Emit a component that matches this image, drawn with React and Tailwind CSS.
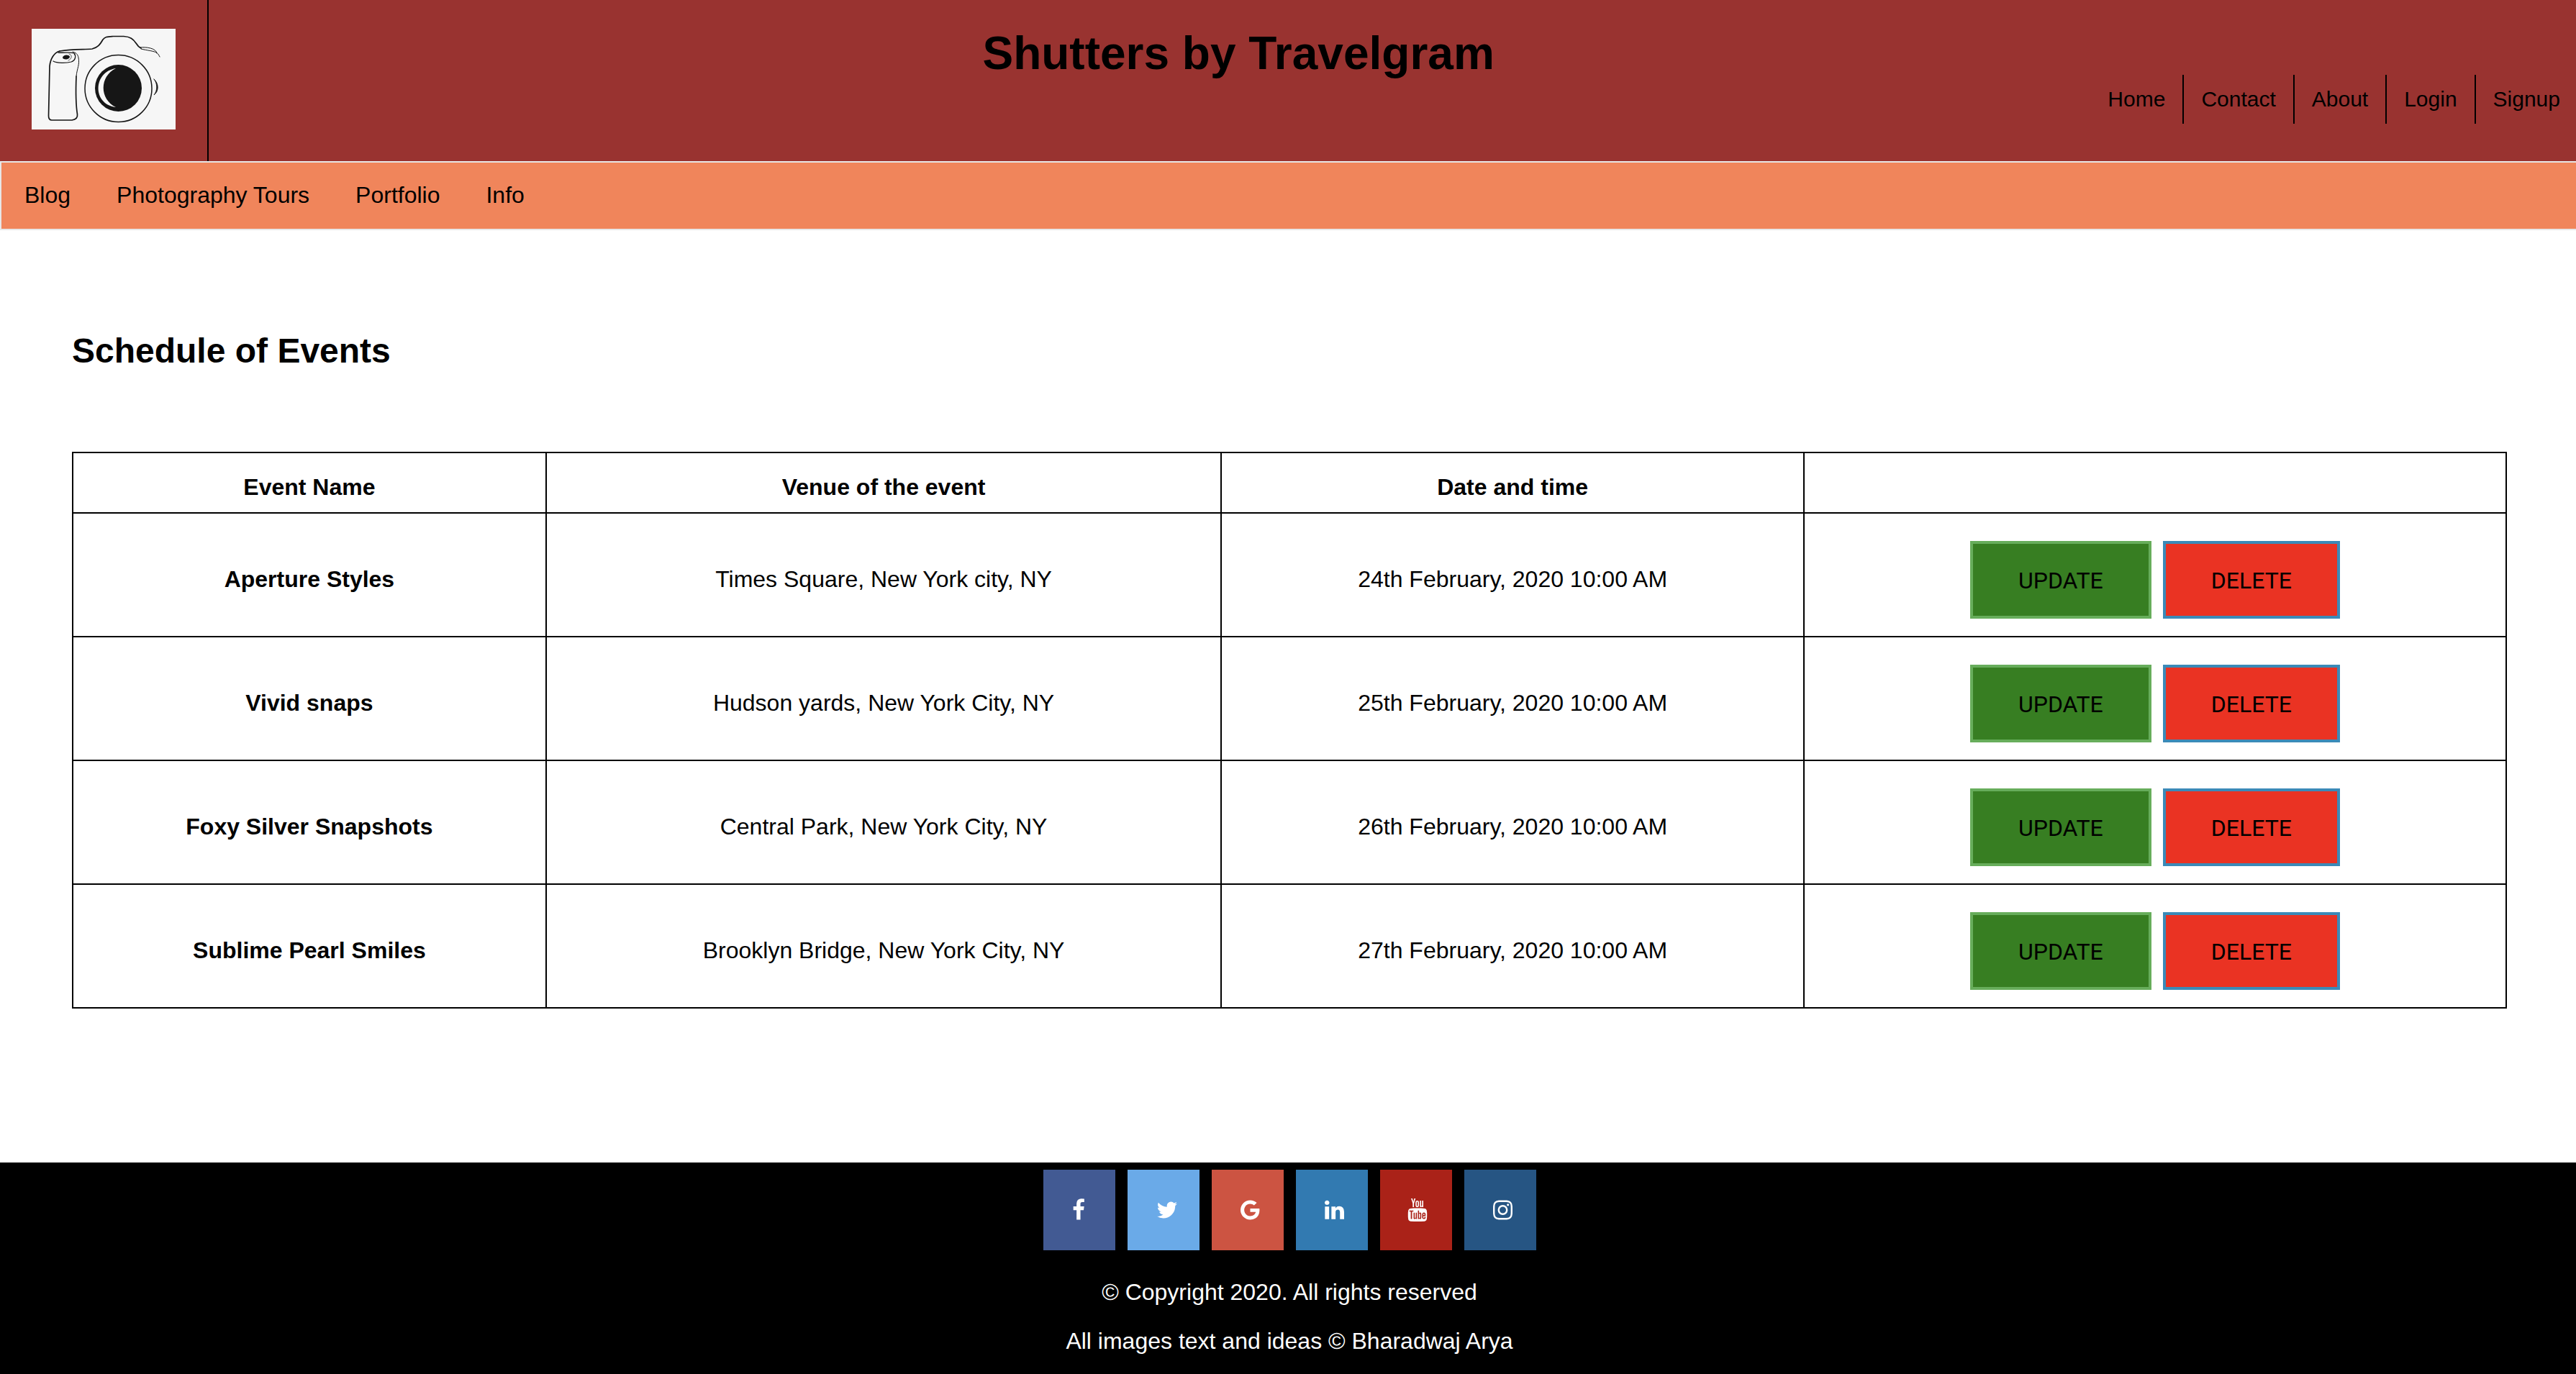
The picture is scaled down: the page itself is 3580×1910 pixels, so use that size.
import React from "react";
import { TfiYoutube } from "react-icons/tfi";

const accountLinks = ["Home", "Contact", "About", "Login", "Signup"];
const siteLinks = ["Blog", "Photography Tours", "Portfolio", "Info"];

const events = [
  { name: "Aperture Styles", venue: "Times Square, New York city, NY", date: "24th February, 2020 10:00 AM" },
  { name: "Vivid snaps", venue: "Hudson yards, New York City, NY", date: "25th February, 2020 10:00 AM" },
  { name: "Foxy Silver Snapshots", venue: "Central Park, New York City, NY", date: "26th February, 2020 10:00 AM" },
  { name: "Sublime Pearl Smiles", venue: "Brooklyn Bridge, New York City, NY", date: "27th February, 2020 10:00 AM" },
];

const socials = [
  {
    label: "Facebook",
    tile: "bg-[#425a93]",
    size: "w-[18px]",
    viewBox: "384 0 1024 1792",
    d: "M1343 12v264h-157q-86 0-116 36t-30 108v189h293l-39 296h-254v759h-306v-759h-255v-296h255v-218q0-186 104-288.5t277-102.5q147 0 228 12z",
  },
  {
    label: "Twitter",
    tile: "bg-[#6aaae8]",
    size: "w-[30px]",
    viewBox: "64 0 1664 1792",
    d: "M1684 408q-67 98-162 167 1 14 1 42 0 130-38 259.5t-115.5 248.5-184.5 210.5-258 146-323 54.5q-271 0-496-145 35 4 78 4 225 0 401-138-105-2-188-64.5t-114-159.5q33 5 61 5 43 0 85-11-112-23-185.5-111.5t-73.5-205.5v-4q68 38 146 41-66-44-105-115t-39-154q0-88 44-163 121 149 294.5 238.5t371.5 99.5q-8-38-8-74 0-134 94.5-228.5t228.5-94.5q140 0 236 102 109-21 205-78-37 115-142 178 93-10 186-50z",
  },
  {
    label: "Google",
    tile: "bg-[#cc5442]",
    size: "w-[27px]",
    viewBox: "128 0 1536 1792",
    d: "M896 786h725q12 67 12 128 0 217-91 387.5t-259.5 266.5-386.5 96q-157 0-299-60.5t-245-163.5-163.5-245-60.5-299 60.5-299 163.5-245 245-163.5 299-60.5q300 0 515 201l-209 201q-123-119-306-119-129 0-238.5 65t-173.5 176.5-64 243.5 64 243.5 173.5 176.5 238.5 65q87 0 160-24t120-60 82-82 51.5-87 22.5-78h-436v-264z",
  },
  {
    label: "LinkedIn",
    tile: "bg-[#327ab1]",
    size: "w-[27px]",
    viewBox: "128 0 1536 1792",
    d: "M477 625v991h-330v-991h330zm21-306q1 73-50.5 122t-135.5 49h-2q-82 0-132-49t-50-122q0-74 51.5-122.5t134.5-48.5 133 48.5 51 122.5zm1166 729v568h-329v-530q0-105-40.5-164.5t-126.5-59.5q-63 0-105.5 34.5t-63.5 85.5q-11 30-11 81v553h-329q2-399 2-647t-1-296l-1-48h329v144h-2q20-32 41-56t56.5-52 87-43.5 114.5-15.5q171 0 275 113.5t104 332.5z",
  },
  { label: "YouTube", tile: "bg-[#aa2218]", icon: TfiYoutube },
  {
    label: "Instagram",
    tile: "bg-[#265583]",
    size: "w-[27px]",
    viewBox: "128 0 1536 1792",
    d: "M1152 896q0-106-75-181t-181-75-181 75-75 181 75 181 181 75 181-75 75-181zm138 0q0 164-115 279t-279 115-279-115-115-279 115-279 279-115 279 115 115 279zm108-410q0 38-27 65t-65 27-65-27-27-65 27-65 65-27 65 27 27 65zm-502-220q-7 0-76.5-.5t-105.5 0-96.5 3-103 10-71.5 18.5q-50 20-88 58t-58 88q-11 29-18.5 71.5t-10 103-3 96.5 0 105.5.5 76.5-.5 76.5 0 105.5 3 96.5 10 103 18.5 71.5q20 50 58 88t88 58q29 11 71.5 18.5t103 10 96.5 3 105.5 0 76.5-.5 76.5.5 105.5 0 96.5-3 103-10 71.5-18.5q50-20 88-58t58-88q11-29 18.5-71.5t10-103 3-96.5 0-105.5-.5-76.5.5-76.5 0-105.5-3-96.5-10-103-18.5-71.5q-20-50-58-88t-88-58q-29-11-71.5-18.5t-103-10-96.5-3-105.5 0-76.5.5zm768 630q0 229-5 317-10 208-124 322t-322 124q-88 5-317 5t-317-5q-208-10-322-124t-124-322q-5-88-5-317t5-317q10-208 124-322t322-124q88-5 317-5t317 5q208 10 322 124t124 322q5 88 5 317z",
  },
];

function CameraLogo() {
  return (
    <svg viewBox="0 0 200 140" className="h-[140px] w-[200px] bg-[#f6f6f6]" role="img" aria-label="Camera" fill="none" stroke="#161616" strokeLinecap="round" strokeLinejoin="round">
      <path strokeWidth="1.7" d="M39 31 C58 28 72 29 84 28 C92 26 95 22 99 15 C102 11 105 11 113 10.5 L128 10.5 C137 11 141 14 145 20 C148 25 150 26 152 27" />
      <path strokeWidth="1" d="M150 26 C160 25 173 27 174 34 M152 28 C160 30 171 31 174 33.5 C176 35 177 37 178 39" />
      <path strokeWidth="1.7" d="M39 31 C31 33 26 42 25 52 L23.500 121 C23.5 125 25 127 28 127 L56 127 C62 126 64 123 63.5 119 C61 103 61 90 62 66" />
      <path strokeWidth="1" d="M62 66 C63 55 67 50 65 40 C64 35 61 33 57 32" />
      <path strokeWidth="1.3" d="M37 33 C44 34 54 32 59 34 C62 38 61 44 55 46 C48 48 35 48 30 45" />
      <path strokeWidth="0.7" d="M52 35 C57 36 56 42 51 44" />
      <ellipse cx="48" cy="39.5" rx="5" ry="3" fill="#161616" stroke="none" transform="rotate(-8 48 39.5)" />
      <circle cx="120.5" cy="83" r="46.5" strokeWidth="1.5" />
      <circle cx="120.5" cy="82.5" r="32.5" fill="#161616" stroke="none" />
      <path fill="#f6f6f6" stroke="none" d="M117 55 C85 60 84 105 117 109 C94 98 94 66 117 55 Z" />
      <path fill="#161616" strokeWidth="0.8" d="M170 70 C177 76 177 87 170 92 C175 86 175 76 170 70 Z" />
    </svg>
  );
}

function SocialLink({ item }) {
  const Icon = item.icon;
  return (
    <a href="#" aria-label={item.label} className={`flex w-[100px] py-10 ${Icon ? "pl-9" : "pl-10"} ${item.tile}`}>
      {Icon ? (
        <Icon className="h-8 w-8 shrink-0" />
      ) : (
        <svg viewBox={item.viewBox} className={`h-8 shrink-0 ${item.size}`} fill="currentColor" aria-hidden="true">
          <path d={item.d} />
        </svg>
      )}
    </a>
  );
}

export default function App() {
  return (
    <div className="flex min-h-screen flex-col bg-white font-['Liberation_Sans',Arial,sans-serif] text-[32px] leading-9 text-black">
      <header className="flex bg-[#993330]">
        <a href="#" className="block border-r-2 border-black px-11 pt-10 pb-11">
          <CameraLogo />
        </a>
        <div className="grid flex-1 grid-cols-1">
          <h1 className="col-start-1 row-start-1 w-[87%] pt-[38px] text-center text-[64px] leading-[72px] font-bold">
            Shutters by Travelgram
          </h1>
          <nav className="col-start-1 row-start-1 mt-[104px] self-start justify-self-end">
            <ul className="-mr-0.5 flex divide-x-2 divide-black text-[30px]">
              {accountLinks.map((label) => (
                <li key={label}>
                  <a href="#" className="block px-6 py-4">{label}</a>
                </li>
              ))}
            </ul>
          </nav>
        </div>
      </header>

      <nav className="border-y-2 border-l-2 border-[#e7e7e7] bg-[#f0855b]">
        <ul className="flex">
          {siteLinks.map((label) => (
            <li key={label}>
              <a href="#" className="block px-8 pt-[27px] pb-[29px]">{label}</a>
            </li>
          ))}
        </ul>
      </nav>

      <main className="flex-1 pr-24 pl-[100px]">
        <h2 className="pt-[139px] pb-[112px] text-[48px] leading-[57px] font-bold">Schedule of Events</h2>
        <table className="w-full table-fixed border-collapse text-center">
          <colgroup>
            <col className="w-[19.45%]" />
            <col className="w-[27.75%]" />
            <col className="w-[23.94%]" />
            <col />
          </colgroup>
          <thead>
            <tr className="h-[84px]">
              <th scope="col" className="border-2 border-black pt-3">Event Name</th>
              <th scope="col" className="border-2 border-black pt-3">Venue of the event</th>
              <th scope="col" className="border-2 border-black pt-3">Date and time</th>
              <td className="border-2 border-black pt-3" />
            </tr>
          </thead>
          <tbody>
            {events.map((event) => (
              <tr key={event.name}>
                <th scope="row" className="border-2 border-black pt-3">{event.name}</th>
                <td className="border-2 border-black pt-3">{event.venue}</td>
                <td className="border-2 border-black pt-3">{event.date}</td>
                <td className="border-2 border-black pt-[38px] pb-6">
                  <div className="flex justify-center gap-4">
                    <button type="button" className="border-4 border-[#67ad5b] bg-[#377e22] px-[63px] pt-[33px] pb-[31px] font-['Roboto',sans-serif]">UPDATE</button>
                    <button type="button" className="border-4 border-[#3b8ab8] bg-[#ea3323] px-[63px] pt-[33px] pb-[31px] font-['Roboto',sans-serif]">DELETE</button>
                  </div>
                </td>
              </tr>
            ))}
          </tbody>
        </table>
      </main>

      <footer className="bg-black pt-2.5 pb-7 pl-1 text-center text-white">
        <div className="flex justify-center gap-[17px]">
          {socials.map((item) => (
            <SocialLink key={item.label} item={item} />
          ))}
        </div>
        <p className="mt-10">© Copyright 2020. All rights reserved</p>
        <p className="mt-8">All images text and ideas © Bharadwaj Arya</p>
      </footer>
    </div>
  );
}
